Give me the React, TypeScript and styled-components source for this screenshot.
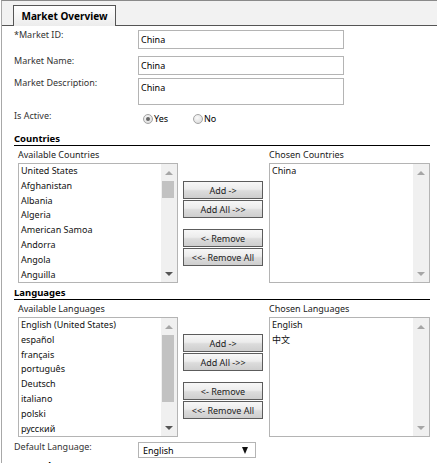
import React from 'react';
import styled, { createGlobalStyle } from 'styled-components';

const countries = [
  'United States',
  'Afghanistan',
  'Albania',
  'Algeria',
  'American Samoa',
  'Andorra',
  'Angola',
  'Anguilla',
];

const languages = [
  'English (United States)',
  'español',
  'français',
  'português',
  'Deutsch',
  'italiano',
  'polski',
  'русский',
];

const GlobalStyle = createGlobalStyle`
  html, body {
    margin: 0;
    padding: 0;
    background: #fff;
  }
  body {
    font-family: "Noto Sans", "Noto Sans CJK SC", sans-serif;
    font-size: 9px;
    color: #222;
  }
`;

const Frame = styled.div`
  height: 462px;
  margin-left: 1px;
  overflow: hidden;

  border-left: 1px solid #a8a8a8;
  border-top: 1px solid #8a8a8a;
`;

const TabBar = styled.div`
  height: 24px;
  display: flex;
  align-items: flex-end;

  padding-left: 11px;
  background-color: #f2f2f2;
  border-bottom: 1px solid #555;
`;

const Tab = styled.div`
  width: 103px;
  height: 21px;
  box-sizing: border-box;
  margin-bottom: -1px;

  display: flex;
  align-items: center;
  justify-content: center;

  border: 1px solid #555;
  border-bottom: none;
  background: linear-gradient(#ffffff, #ececec);

  font-weight: 700;
  font-size: 10px;
  color: #000;
`;

const Form = styled.div`
  padding: 0 7px 0 12px;
`;

const FieldRow = styled.div<{ $top: number }>`
  display: flex;
  align-items: flex-start;
  margin-top: ${({ $top }) => $top}px;
`;

const Label = styled.div`
  width: 124px;
  flex: none;
  line-height: 10px;
  color: #333;
`;

const TextInput = styled.input`
  width: 206px;
  height: 19px;
  box-sizing: border-box;
  margin: 0;
  padding: 0 2px;

  border: 1px solid #b4b4b4;
  border-radius: 0;
  outline: none;

  font-family: inherit;
  font-size: 9px;
  color: #000;
`;

const TextArea = styled.textarea`
  width: 206px;
  height: 27px;
  box-sizing: border-box;
  margin: 0;
  padding: 3px 2px 0;

  border: 1px solid #b4b4b4;
  border-radius: 0;
  outline: none;
  resize: none;
  overflow: hidden;

  font-family: inherit;
  font-size: 9px;
  line-height: 12px;
  color: #000;
  display: block;
`;

const RadioGroup = styled.div`
  display: flex;
  padding: 2px 0 0 5px;
`;

const RadioOption = styled.label`
  width: 50px;
  display: flex;
  align-items: center;

  line-height: 12px;
  color: #000;
`;

const RadioCircle = styled.span<{ $checked?: boolean }>`
  width: 10px;
  height: 10px;
  box-sizing: border-box;
  flex: none;
  margin-right: 1px;

  display: flex;
  align-items: center;
  justify-content: center;

  border: 1px solid #a4a4a4;
  border-radius: 50%;
  background: radial-gradient(circle at 40% 35%, #fafafa, #d6d6d6);

  &::after {
    content: '';
    display: ${({ $checked }) => ($checked ? 'block' : 'none')};
    width: 4px;
    height: 4px;
    border-radius: 50%;
    background-color: #666;
  }
`;

const SectionHeading = styled.div<{ $top: number }>`
  margin-top: ${({ $top }) => $top}px;

  line-height: 12px;
  font-weight: 700;
  font-size: 9.5px;
  color: #000;

  border-bottom: 1px solid #000;
`;

const PickerRow = styled.div`
  display: flex;
  align-items: flex-start;
  padding-left: 4px;
`;

const PickerColumn = styled.div<{ $width: number }>`
  width: ${({ $width }) => $width}px;
  flex: none;
`;

const ColumnLabel = styled.div`
  margin: 3px 0 2px;
  line-height: 12px;
  color: #222;
`;

const ListBox = styled.div`
  height: 120px;
  box-sizing: border-box;
  display: flex;

  border: 1px solid #b4b4b4;
  background-color: #fff;
`;

const ListItems = styled.div`
  flex: 1;
  padding-left: 2px;
  overflow: hidden;
`;

const ListItem = styled.div`
  line-height: 14.8px;
  white-space: nowrap;
  color: #111;
`;

const ScrollTrack = styled.div`
  width: 16px;
  flex: none;
  display: flex;
  flex-direction: column;

  background-color: #f0f0f0;
`;

const ArrowCell = styled.div`
  height: 17px;
  flex: none;
  display: flex;
  align-items: center;
  justify-content: center;
`;

const Arrow = styled.span<{ $down?: boolean; $active?: boolean }>`
  width: 0;
  height: 0;
  border-left: 4px solid transparent;
  border-right: 4px solid transparent;
  ${({ $down, $active }) =>
    $down
      ? `border-top: 4px solid ${$active ? '#555' : '#a6a6a6'};`
      : `border-bottom: 4px solid ${$active ? '#555' : '#a6a6a6'};`}
`;

const ScrollSpace = styled.div`
  flex: 1;
`;

const Thumb = styled.div<{ $height: number }>`
  width: 12px;
  height: ${({ $height }) => $height}px;
  margin-left: 1px;
  background-color: #c2c2c2;
`;

const ButtonColumn = styled.div<{ $top: number }>`
  width: 80px;
  flex: none;
  margin: ${({ $top }) => $top}px 6px 0 5px;

  display: flex;
  flex-direction: column;
  gap: 1px;
`;

const MoveButton = styled.button<{ $gapBefore?: boolean }>`
  width: 80px;
  height: 18px;
  margin: ${({ $gapBefore }) => ($gapBefore ? '10px' : '0')} 0 0;
  padding: 0;

  border: 1px solid #5c5c5c;
  border-radius: 0;
  background: linear-gradient(#f7f7f7 0%, #ececec 45%, #dcdcdc 55%, #cecece 100%);

  font-family: inherit;
  font-size: 9px;
  color: #222;
`;

const SelectBox = styled.div`
  width: 118px;
  height: 16px;
  box-sizing: border-box;

  display: flex;
  align-items: center;
  justify-content: space-between;
  padding: 0 7px 0 4px;

  border: 1px solid #b4b4b4;
  color: #000;
`;

const SelectArrow = styled.span`
  width: 0;
  height: 0;
  border-left: 3.5px solid transparent;
  border-right: 3.5px solid transparent;
  border-top: 7px solid #111;
`;

type PickerProps = {
  available: string;
  chosen: string;
  items: string[];
  picked: string[];
  thumb: number;
  buttonTop: number;
};

const Picker = ({ available, chosen, items, picked, thumb, buttonTop }: PickerProps) => {
  return (
    <PickerRow>
      <PickerColumn $width={160}>
        <ColumnLabel>{available}</ColumnLabel>
        <ListBox>
          <ListItems>
            {items.map((item) => (
              <ListItem key={item}>{item}</ListItem>
            ))}
          </ListItems>
          <ScrollTrack>
            <ArrowCell>
              <Arrow />
            </ArrowCell>
            <Thumb $height={thumb} />
            <ScrollSpace />
            <ArrowCell>
              <Arrow $down $active />
            </ArrowCell>
          </ScrollTrack>
        </ListBox>
      </PickerColumn>
      <ButtonColumn $top={buttonTop}>
        <MoveButton>Add -&gt;</MoveButton>
        <MoveButton>Add All -&gt;&gt;</MoveButton>
        <MoveButton $gapBefore>&lt;- Remove</MoveButton>
        <MoveButton>&lt;&lt;- Remove All</MoveButton>
      </ButtonColumn>
      <PickerColumn $width={161}>
        <ColumnLabel>{chosen}</ColumnLabel>
        <ListBox>
          <ListItems>
            {picked.map((item) => (
              <ListItem key={item}>{item}</ListItem>
            ))}
          </ListItems>
          <ScrollTrack>
            <ArrowCell>
              <Arrow />
            </ArrowCell>
            <ScrollSpace />
            <ArrowCell>
              <Arrow $down />
            </ArrowCell>
          </ScrollTrack>
        </ListBox>
      </PickerColumn>
    </PickerRow>
  );
};

const App = () => {
  return (
    <>
      <GlobalStyle />
      <Frame>
        <TabBar>
          <Tab>Market Overview</Tab>
        </TabBar>
        <Form>
          <FieldRow $top={4}>
            <Label>*Market ID:</Label>
            <TextInput readOnly value="China" />
          </FieldRow>
          <FieldRow $top={7}>
            <Label>Market Name:</Label>
            <TextInput readOnly value="China" />
          </FieldRow>
          <FieldRow $top={3}>
            <Label>Market Description:</Label>
            <TextArea readOnly value="China" />
          </FieldRow>
          <FieldRow $top={6}>
            <Label>Is Active:</Label>
            <RadioGroup>
              <RadioOption>
                <RadioCircle $checked />
                Yes
              </RadioOption>
              <RadioOption>
                <RadioCircle />
                No
              </RadioOption>
            </RadioGroup>
          </FieldRow>

          <SectionHeading $top={8}>Countries</SectionHeading>
          <Picker
            available="Available Countries"
            chosen="Chosen Countries"
            items={countries}
            picked={['China']}
            thumb={17}
            buttonTop={35}
          />

          <SectionHeading $top={4}>Languages</SectionHeading>
          <Picker
            available="Available Languages"
            chosen="Chosen Languages"
            items={languages}
            picked={['English', '中文']}
            thumb={67}
            buttonTop={34}
          />

          <FieldRow $top={5}>
            <Label>Default Language:</Label>
            <SelectBox>
              English
              <SelectArrow />
            </SelectBox>
          </FieldRow>

          <SectionHeading $top={2}>General</SectionHeading>
        </Form>
      </Frame>
    </>
  );
};

export default App;
